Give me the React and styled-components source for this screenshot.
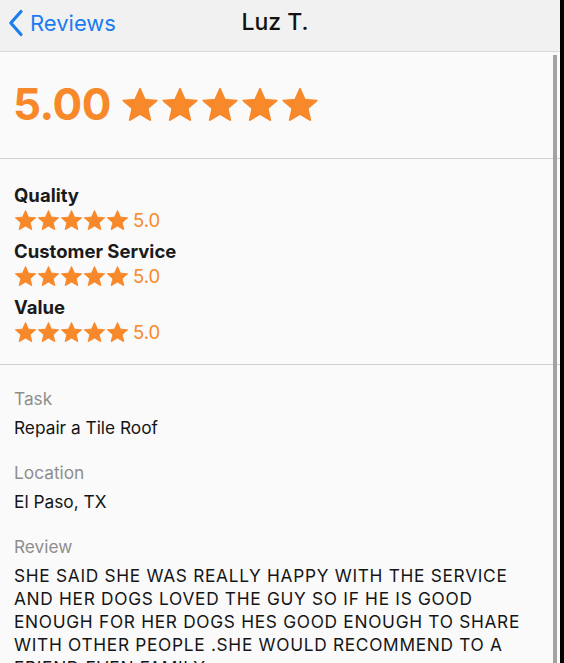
import React from "react";
import styled, { createGlobalStyle } from "styled-components";

const Global = createGlobalStyle`
  html, body { margin: 0; padding: 0; background: #000; }
  body { font-family: Inter, "Liberation Sans", Arial, sans-serif; -webkit-font-smoothing: antialiased; }
  * { box-sizing: border-box; }
`;

const ORANGE = "#f7892a";

const Page = styled.div`
  display: flex;
  width: 564px;
  height: 663px;
  overflow: hidden;
  background: #000;
`;

const Screen = styled.div`
  position: relative;
  width: 560px;
  height: 663px;
  display: flex;
  flex-direction: column;
  background: #fafafa;
  overflow: hidden;
`;

const NavBar = styled.header`
  height: 52px;
  flex: none;
  display: grid;
  grid-template-columns: 1fr auto 1fr;
  align-items: center;
  background: #f1f1f1;
  border-bottom: 1px solid #d9d9d9;
  padding: 0 8px;
`;

const BackButton = styled.button`
  display: flex;
  align-items: center;
  gap: 6px;
  border: 0;
  background: none;
  padding: 0;
  color: #1a7cf0;
  font: inherit;
  font-size: 22px;
  justify-self: start;
  margin-top: -6px;
`;

const Title = styled.h1`
  margin: -8px 0 0 -10px;
  font-size: 23px;
  font-weight: 500;
  color: #111;
`;

const Hero = styled.section`
  height: 107px;
  flex: none;
  display: flex;
  align-items: center;
  gap: 10px;
  padding: 0 14px 0 13px;
  border-bottom: 1px solid #cfcfcf;
`;

const BigScore = styled.span`
  font-size: 44px;
  font-weight: 700;
  color: ${ORANGE};
  letter-spacing: -0.5px;
  margin-top: -2px;
`;

const Stars = styled.span`
  display: inline-flex;
  gap: ${(p) => p.$gap}px;
`;

const Categories = styled.section`
  flex: none;
  padding: 24px 14px 20px;
  display: flex;
  flex-direction: column;
  gap: 7px;
  border-bottom: 1px solid #cfcfcf;
`;

const Category = styled.div`
  display: flex;
  flex-direction: column;
  gap: 1px;
`;

const CategoryName = styled.div`
  font-size: 18.5px;
  font-weight: 700;
  color: #1a1a1a;
  line-height: 24px;
`;

const RatingRow = styled.div`
  display: flex;
  align-items: center;
  gap: 4px;
  height: 24px;
`;

const SmallScore = styled.span`
  font-size: 18.5px;
  color: ${ORANGE};
  line-height: 24px;
`;

const Details = styled.section`
  padding: 22px 22px 0 14px;
  display: flex;
  flex-direction: column;
  gap: 22px;
`;

const Field = styled.div`
  display: flex;
  flex-direction: column;
  gap: 6px;
`;

const Label = styled.div`
  font-size: 17.3px;
  line-height: 23px;
  color: #8e8e8e;
`;

const Value = styled.div`
  font-size: 17.3px;
  line-height: 23px;
  color: #151515;
  letter-spacing: ${(p) => (p.$caps ? "0.7px" : "0")};
`;

const Scrollbar = styled.div`
  position: absolute;
  right: 3px;
  top: 55px;
  bottom: 0;
  width: 4px;
  background: #a3a3a3;
`;

const Star = ({ size }) => (
  <svg width={size} height={size} viewBox="0 0 24 24" aria-hidden="true">
    <path
      d="M12 1.6l3.1 6.9 7.5.7-5.7 5 1.7 7.4L12 17.8l-6.6 3.8 1.7-7.4-5.7-5 7.5-.7z"
      fill={ORANGE}
      stroke={ORANGE}
      strokeWidth="1"
      strokeLinejoin="round"
    />
  </svg>
);

const StarRow = ({ size, gap }) => (
  <Stars $gap={gap}>
    {[0, 1, 2, 3, 4].map((i) => (
      <Star key={i} size={size} />
    ))}
  </Stars>
);

const categories = ["Quality", "Customer Service", "Value"];

export default function App() {
  return (
    <Page>
      <Global />
      <Screen>
        <NavBar>
          <BackButton>
            <svg width="16" height="28" viewBox="0 0 16 28" aria-hidden="true">
              <path
                d="M13 2.5L2.8 14 13 25.5"
                fill="none"
                stroke="#1a7cf0"
                strokeWidth="3.2"
                strokeLinecap="round"
                strokeLinejoin="round"
              />
            </svg>
            Reviews
          </BackButton>
          <Title>Luz T.</Title>
          <span />
        </NavBar>
        <Hero>
          <BigScore>5.00</BigScore>
          <StarRow size={38} gap={2} />
        </Hero>
        <Categories>
          {categories.map((c) => (
            <Category key={c}>
              <CategoryName>{c}</CategoryName>
              <RatingRow>
                <StarRow size={23} gap={0} />
                <SmallScore>5.0</SmallScore>
              </RatingRow>
            </Category>
          ))}
        </Categories>
        <Details>
          <Field>
            <Label>Task</Label>
            <Value>Repair a Tile Roof</Value>
          </Field>
          <Field>
            <Label>Location</Label>
            <Value>El Paso, TX</Value>
          </Field>
          <Field>
            <Label>Review</Label>
            <Value $caps>
              SHE SAID SHE WAS REALLY HAPPY WITH THE SERVICE AND HER DOGS LOVED THE GUY SO IF HE IS GOOD ENOUGH FOR HER DOGS HES GOOD ENOUGH TO SHARE WITH OTHER PEOPLE .SHE WOULD RECOMMEND TO A FRIEND EVEN FAMILY
            </Value>
          </Field>
        </Details>
        <Scrollbar />
      </Screen>
    </Page>
  );
}
